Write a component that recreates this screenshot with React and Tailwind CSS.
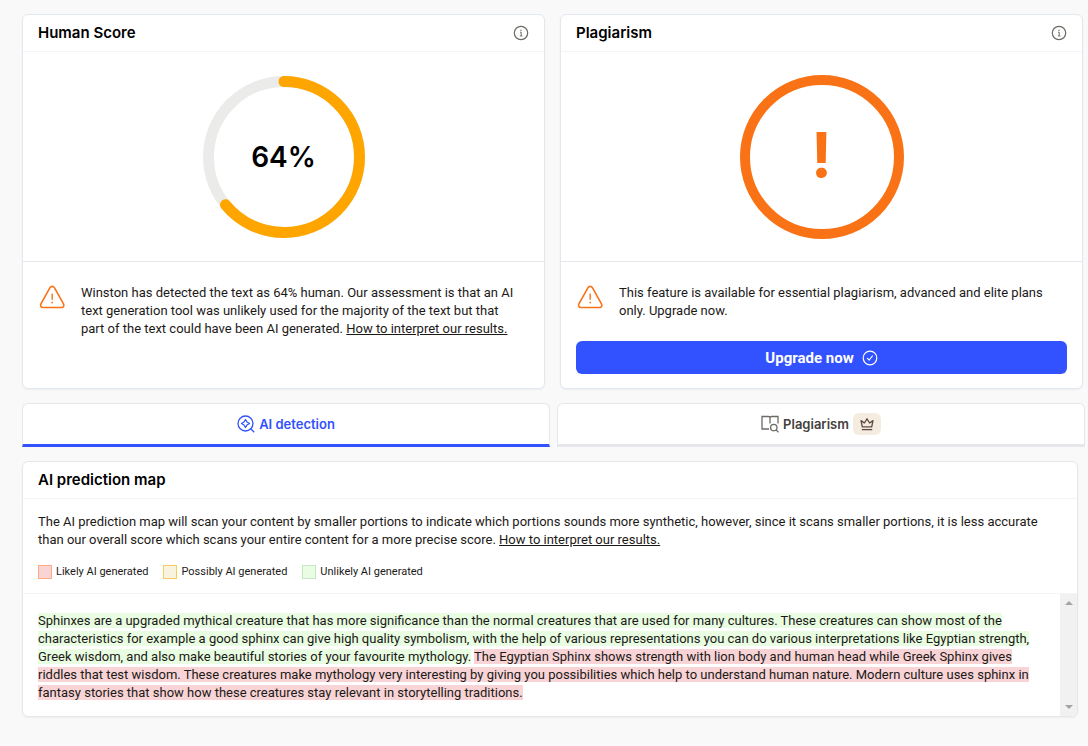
import React from 'react';
import clsx from 'clsx';

const InfoIcon = () => (
  <svg width="16" height="16" viewBox="0 0 16 16" fill="none" stroke="#6b6b66" strokeWidth="1.2">
    <circle cx="8" cy="8" r="6.7" />
    <path d="M7 7.2h1.2v3.6M6.8 10.9h2.6" strokeWidth="1" />
    <circle cx="8" cy="5.2" r="0.7" fill="#6b6b66" stroke="none" />
  </svg>
);

const WarningIcon = () => (
  <svg className="shrink-0" width="28" height="26" viewBox="0 0 28 26" fill="none" stroke="#f97316" strokeWidth="1.6" strokeLinecap="round" strokeLinejoin="round">
    <path d="M12 3.7a2.5 2.5 0 0 1 4.4 0l9.2 16.4a2.3 2.3 0 0 1-2 3.4H4.8a2.3 2.3 0 0 1-2-3.4z" />
    <path d="M14.2 10.2v5" strokeWidth="1.4" />
    <circle cx="14.2" cy="18.6" r="0.9" fill="#f97316" stroke="none" />
  </svg>
);

const CheckCircleIcon = () => (
  <svg width="16" height="16" viewBox="0 0 16 16" fill="none" stroke="#ffffff" strokeWidth="1.2" strokeLinecap="round" strokeLinejoin="round">
    <circle cx="8" cy="8" r="6.8" />
    <path d="M5.4 8.4 7.2 10l3.2-4" />
  </svg>
);

const DetectionIcon = () => (
  <svg width="18" height="18" viewBox="0 0 18 18" fill="none" stroke="#3352ff" strokeWidth="1.3">
    <circle cx="8.5" cy="8.5" r="7.5" />
    <path d="M13.8 13.8 17.2 17.2" />
    <path d="M8.5 4.5 10 7l2.5 1.5L10 10l-1.5 2.5L7 10 4.5 8.5 7 7z" strokeLinejoin="round" />
  </svg>
);

const BookSearchIcon = () => (
  <svg width="18" height="18" viewBox="0 0 18 18" fill="none" stroke="#6b6b66" strokeWidth="1.3">
    <path d="M8 14H1V1.5h6.5Q9 1.5 9 3v5.5M9 3q0-1.5 1.5-1.5H17v7" />
    <circle cx="12.8" cy="12.6" r="3.2" />
    <path d="m15.1 14.9 2.4 2.4" />
  </svg>
);

const CrownIcon = () => (
  <svg width="14" height="14" viewBox="0 0 14 14" fill="none" stroke="#5b4a45" strokeWidth="1.3" strokeLinejoin="round">
    <path d="M2.3 9.8 1 3.6 4.4 6 7 1.8 9.6 6 13 3.6l-1.3 6.2z" />
    <path d="M1.8 12.6h10.4" />
  </svg>
);

const CardHeader = ({ title, info }) => (
  <div className="flex items-center justify-between border-b border-gray-100 px-[15px] py-2">
    <h2 className="font-['Inter',sans-serif] text-[15px] leading-5 font-semibold text-black">{title}</h2>
    {info && (
      <button type="button" aria-label={`About ${title}`}>
        <InfoIcon />
      </button>
    )}
  </div>
);

const ScoreRing = ({ score }) => {
  const radius = 75.5;
  const length = 2 * Math.PI * radius;

  return (
    <div className="grid place-items-center pt-[23px] pb-[22px]">
      <svg className="col-start-1 row-start-1" width="164" height="164" viewBox="0 0 164 164" fill="none" strokeWidth="11">
        <circle cx="82" cy="82" r={radius} stroke="#ebebea" />
        <circle
          cx="82"
          cy="82"
          r={radius}
          stroke="#ffa500"
          strokeLinecap="round"
          strokeDasharray={`${(length * score) / 100} ${length}`}
          transform="rotate(-90 82 82)"
        />
      </svg>
      <span className="col-start-1 row-start-1 font-['Inter',sans-serif] text-[28px] leading-8 font-semibold text-black">{score}%</span>
    </div>
  );
};

const Tab = ({ active, children }) => (
  <button
    type="button"
    role="tab"
    aria-selected={active}
    className={clsx(
      "flex h-11 flex-1 items-center justify-center gap-1 rounded-t-md border border-b-[3px] border-gray-200 bg-white font-['Inter',sans-serif] text-[13px] font-semibold",
      active ? 'border-b-[#3352ff] text-[#3352ff]' : 'text-[#44403c]'
    )}
  >
    {children}
  </button>
);

const legend = [
  { label: 'Likely AI generated', swatch: 'border-[#fdab80] bg-[#f8d4d6]' },
  { label: 'Possibly AI generated', swatch: 'border-[#f8cd5c] bg-[#f8f3df]' },
  { label: 'Unlikely AI generated', swatch: 'border-[#c9e6c5] bg-[#e8fde1]' },
];

const App = () => {
  return (
    <main className="min-h-screen bg-[#f9f9f9] pt-[14px] pr-[3px] pb-7 pl-[22px] font-['Roboto',sans-serif] text-[13px] leading-[18px] text-[#1c1917]">
      <div className="mr-[2px] grid grid-cols-2 gap-[15px]">
        <section className="rounded-md border border-slate-200 bg-white shadow-xs">
          <CardHeader title="Human Score" info />
          <ScoreRing score={64} />
          <div className="flex gap-[15px] border-t border-gray-200 pt-[22px] pr-5 pl-[15px]">
            <WarningIcon />
            <p>
              Winston has detected the text as 64% human. Our assessment is that an AI
              text generation tool was unlikely used for the majority of the text but that
              part of the text could have been AI generated.{' '}
              <a href="#results" className="underline">How to interpret our results.</a>
            </p>
          </div>
        </section>

        <section className="rounded-md border border-slate-200 bg-white shadow-xs">
          <CardHeader title="Plagiarism" info />
          <div className="flex justify-center pt-[23px] pb-[22px]">
            <div className="flex size-[164px] items-center justify-center rounded-full border-[10px] border-[#f97316] pb-1 font-['Inter',sans-serif] text-[62px] leading-none font-bold text-[#f97316]">
              !
            </div>
          </div>
          <div className="border-t border-gray-200 px-[15px] pt-[22px] pb-[14px]">
            <div className="flex gap-[15px]">
              <WarningIcon />
              <p>
                This feature is available for essential plagiarism, advanced and elite plans
                only. Upgrade now.
              </p>
            </div>
            <button type="button" className="mt-[21px] flex h-[33px] w-full items-center justify-center gap-2 rounded-md bg-[#3352ff] text-[15px] font-bold text-white">
              Upgrade now
              <CheckCircleIcon />
            </button>
          </div>
        </section>
      </div>

      <div role="tablist" className="mt-[14px] flex gap-[7px]">
        <Tab active>
          <DetectionIcon />
          AI detection
        </Tab>
        <Tab active={false}>
          <BookSearchIcon />
          Plagiarism
          <span className="rounded-md bg-[#f5ece0] px-[7px] py-1">
            <CrownIcon />
          </span>
        </Tab>
      </div>

      <section className="mt-[14px] mr-[7px] overflow-hidden rounded-md border border-gray-200 bg-white shadow-xs">
        <CardHeader title="AI prediction map" />
        <div className="border-b border-gray-100 px-[15px] pt-[14px] pb-3">
          <p>
            The AI prediction map will scan your content by smaller portions to indicate which portions sounds more synthetic, however, since it scans smaller portions, it is less accurate
            than our overall score which scans your entire content for a more precise score.{' '}
            <a href="#results" className="underline">How to interpret our results.</a>
          </p>
          <ul className="mt-[14px] flex gap-[15px] text-[11px]">
            {legend.map((item) => (
              <li key={item.label} className="flex items-center gap-1">
                <span className={clsx('size-[14px] border', item.swatch)}></span>
                {item.label}
              </li>
            ))}
          </ul>
        </div>

        <div className="flex">
          <p className="flex-1 px-[15px] pt-[18px] pb-[14px]">
            <mark className="bg-[#e8fde1] text-inherit">
              Sphinxes are a upgraded mythical creature that has more significance than the normal creatures that are used for many cultures. These creatures can show most of the
              characteristics for example a good sphinx can give high quality symbolism, with the help of various representations you can do various interpretations like Egyptian strength,
              Greek wisdom, and also make beautiful stories of your favourite mythology.
            </mark>{' '}
            <mark className="bg-[#f8d4d6] text-inherit">
              The Egyptian Sphinx shows strength with lion body and human head while Greek Sphinx gives
              riddles that test wisdom. These creatures make mythology very interesting by giving you possibilities which help to understand human nature. Modern culture uses sphinx in
              fantasy stories that show how these creatures stay relevant in storytelling traditions.
            </mark>
          </p>
          <div className="flex w-[17px] flex-col items-center justify-between bg-[#f1f1f1] py-[7px]">
            <button type="button" aria-label="Scroll up">
              <svg width="8" height="4" viewBox="0 0 8 4" fill="#a3a3a3"><path d="M4 0 8 4H0z" /></svg>
            </button>
            <button type="button" aria-label="Scroll down">
              <svg width="8" height="4" viewBox="0 0 8 4" fill="#a3a3a3"><path d="M0 0h8L4 4z" /></svg>
            </button>
          </div>
        </div>
      </section>
    </main>
  );
};

export default App;
